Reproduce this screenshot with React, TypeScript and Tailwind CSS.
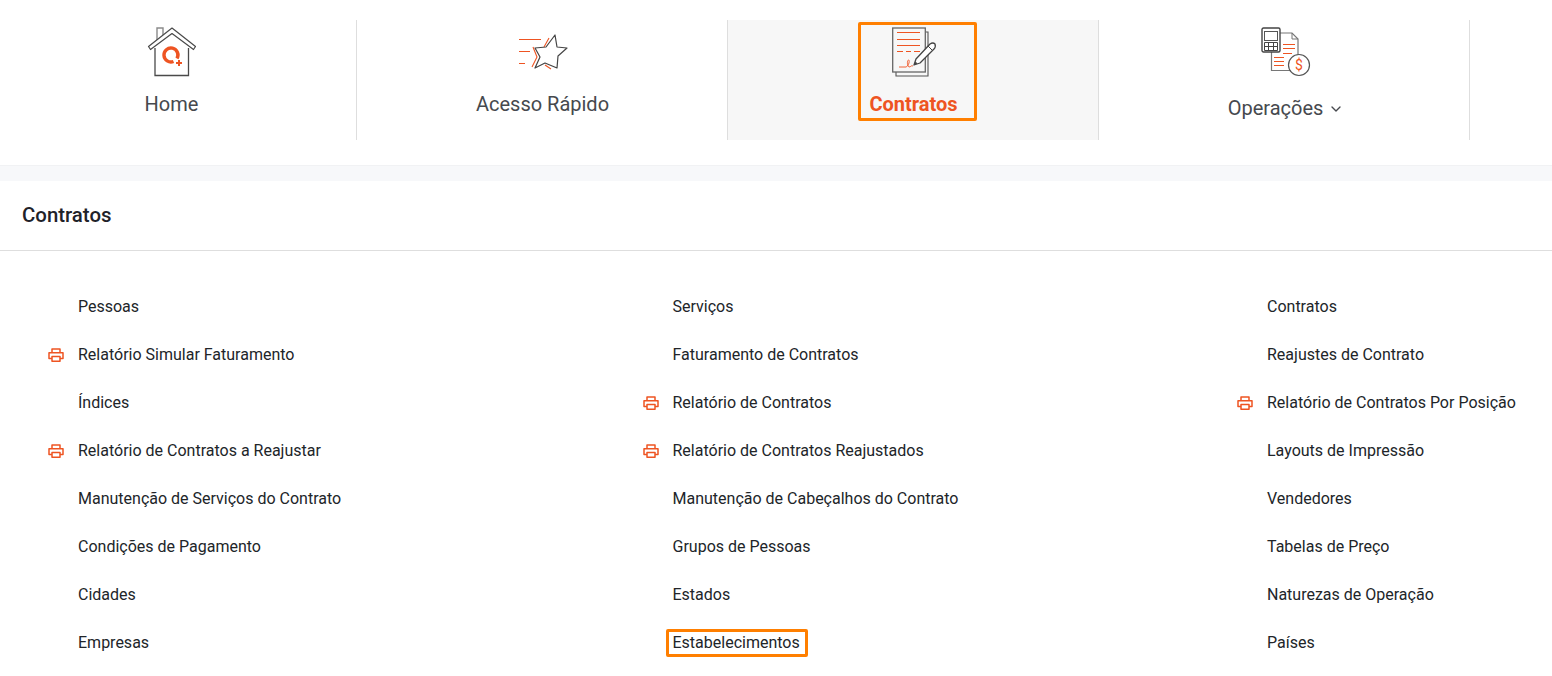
import { ChevronDown } from "lucide-react";

const ORANGE = "#ee5422";

const HomeIcon = () => (
  <svg width="50" height="50" viewBox="0 0 50 50" fill="none">
    <path d="M10 13 V1 H16 V8" stroke="#8a8a8a" strokeWidth="1.400" />
    <path d="M8 21 V48.500 H41.500 V21" stroke="#4a4a4a" strokeWidth="1.300" />
    <path d="M25 1 L48.500 19.500 L46.500 22.500 L25 6.500 L3.500 22.500 L1.500 19.500 Z" fill="#fff" stroke="#4a4a4a" strokeWidth="1.200" strokeLinejoin="round" />
    <path d="M30 31.500 A7 7 0 1 0 26.500 34.500" stroke={ORANGE} strokeWidth="3.400" />
    <path d="M32 33 V39 M29 36 H35" stroke={ORANGE} strokeWidth="2" />
  </svg>
);

const StarIcon = () => (
  <svg width="52" height="38" viewBox="0 0 52 38" fill="none">
    <path d="M1 6.500 H23 M1 18.500 H12 M1 30.500 H7" stroke={ORANGE} strokeWidth="1" />
    <path d="M15 14 L19 24 L14 34 M26 14 L31 5 M27 32 L33 36" stroke={ORANGE} strokeWidth="1.100" />
    <path d="M37 2 L39 14 L49 15 L40 23 L39 35 L27 30 L17 35 L22 24 L17 15 L28 14 Z" fill="#fff" stroke="#444" strokeWidth="1.200" strokeLinejoin="round" />
  </svg>
);

const ContractIcon = () => (
  <svg width="46" height="50" viewBox="0 0 46 50" fill="none">
    <path d="M4 45 V49 H36 V5 H33" stroke="#555" strokeWidth="1.100" />
    <rect x="0.700" y="1" width="32.600" height="44" fill="#f7f7f7" stroke="#666" strokeWidth="1.300" />
    <path d="M5 5.500 H28 M5 12.500 H28 M5 18.500 H28" stroke={ORANGE} strokeWidth="1" />
    <path d="M5 24.500 H11 M14 24.500 H19 M22 24.500 H28" stroke={ORANGE} strokeWidth="1" />
    <path d="M7 40 H14 C17 39 18 33 16.500 33 C15 33 15 39 17 40 C19 40 19 38 21 39" stroke={ORANGE} strokeWidth="0.900" />
    <path d="M22 38 L24 32 L38 17 Q41 15 43 17 Q44 20 42 22 L28 36 Z" fill="#fff" stroke="#444" strokeWidth="1.300" strokeLinejoin="round" />
    <path d="M36 19 L40.500 23.500" stroke="#444" strokeWidth="1" />
    <path d="M22 38 L23.500 34.500 L25.500 36.500 Z" fill="#444" />
  </svg>
);

const OperationsIcon = () => (
  <svg width="50" height="50" viewBox="0 0 50 50" fill="none">
    <path d="M10.500 6 H31 L37 12 V43.500 H10.500 Z" fill="#fff" stroke="#777" strokeWidth="1.200" />
    <path d="M31 6 V12 H37" stroke="#777" strokeWidth="1" />
    <path d="M22 17.500 H34 M22 21.500 H34 M22 26.500 H31 M13 30.500 H23 M13 34.500 H23 M13 38.500 H23" stroke={ORANGE} strokeWidth="1" />
    <rect x="1" y="1" width="18" height="24" rx="1.500" fill="#fff" stroke="#444" strokeWidth="1.400" />
    <rect x="3.500" y="4.500" width="13" height="9" stroke="#555" strokeWidth="1" />
    <path d="M3.500 15.500 H16.500 V23.500 H3.500 Z M7.500 15.500 V23.500 M12.500 15.500 V23.500 M3.500 19.500 H16.500" stroke="#444" strokeWidth="1" />
    <circle cx="38" cy="38" r="10.500" fill="#fff" stroke="#555" strokeWidth="1.200" />
    <text x="38" y="43" textAnchor="middle" fontSize="14" fill={ORANGE} fontFamily="Roboto, sans-serif">$</text>
  </svg>
);

const PrinterIcon = () => (
  <svg width="16" height="14" viewBox="0 0 16 14" fill="none" stroke={ORANGE} strokeWidth="1.500" strokeLinejoin="round">
    <path d="M4 4.500 V1 H12 V4.500" />
    <path d="M4 10.500 H1 V4.750 H15 V10.500 H12" />
    <path d="M4 8.500 H12 V13.250 H4 Z" />
  </svg>
);

const columns = [
  [
    { label: "Pessoas" },
    { label: "Relatório Simular Faturamento", print: true },
    { label: "Índices" },
    { label: "Relatório de Contratos a Reajustar", print: true },
    { label: "Manutenção de Serviços do Contrato" },
    { label: "Condições de Pagamento" },
    { label: "Cidades" },
    { label: "Empresas" },
  ],
  [
    { label: "Serviços" },
    { label: "Faturamento de Contratos" },
    { label: "Relatório de Contratos", print: true },
    { label: "Relatório de Contratos Reajustados", print: true },
    { label: "Manutenção de Cabeçalhos do Contrato" },
    { label: "Grupos de Pessoas" },
    { label: "Estados" },
    { label: "Estabelecimentos", focus: true },
  ],
  [
    { label: "Contratos" },
    { label: "Reajustes de Contrato" },
    { label: "Relatório de Contratos Por Posição", print: true },
    { label: "Layouts de Impressão" },
    { label: "Vendedores" },
    { label: "Tabelas de Preço" },
    { label: "Naturezas de Operação" },
    { label: "Países" },
  ],
];

const App = () => {
  return (
    <div className="h-[676px] w-[1552px] overflow-hidden bg-white font-['Roboto',sans-serif]">
      {/* Top navigation */}
      <div className="h-[165px] pt-5">
        <div className="ml-[-15px] flex h-[120px] w-[1485px]">
          <div className="flex w-[372px] flex-col items-center border-r border-[#dedede] pt-[7px] pl-[2px] text-[#46494e]">
            <HomeIcon />
            <span className="mt-[15px] text-xl leading-6">Home</span>
          </div>
          <div className="flex w-[371px] flex-col items-center border-r border-[#dedede] pt-[13px] pl-[1px] text-[#46494e]">
            <span className="ml-[3px]">
              <StarIcon />
            </span>
            <span className="mt-[21px] text-xl leading-6">Acesso Rápido</span>
          </div>
          <div className="flex w-[371px] flex-col items-center border-r border-[#dedede] bg-[#f7f7f7] pt-[2px]">
            <div className="ml-[9px] flex h-[99px] w-[119px] flex-col items-center rounded-[2px] border-[3px] border-[#ff7f00] pt-[2px] pr-[8px]">
              <span className="ml-[3px]">
                <ContractIcon />
              </span>
              <span className="mt-[15px] text-xl leading-6 font-bold text-[#ee5422]">Contratos</span>
            </div>
          </div>
          <div className="flex w-[371px] flex-col items-center border-r border-[#dedede] pt-[7px] pl-[4px] text-[#46494e]">
            <OperationsIcon />
            <span className="mt-[19px] flex items-center gap-[5px] text-xl leading-6">
              Operações
              <ChevronDown size={16} strokeWidth={2} className="mt-[2px]" />
            </span>
          </div>
        </div>
      </div>

      <div className="h-4 border-t border-[#f1f2f4] bg-[#f7f8fa]" />

      {/* Section title */}
      <div className="flex h-[70px] items-center border-b border-[#dedede] pl-[22px]">
        <h2 className="text-[20.400px] font-medium text-[#1f2229]">Contratos</h2>
      </div>

      {/* Menu links */}
      <div className="grid grid-cols-[594.5px_594.5px_1fr] pt-8 pl-12">
        {columns.map((items, i) => (
          <div key={i} className="flex flex-col">
            {items.map((item) => (
              <div key={item.label} className="flex h-12 items-center text-base whitespace-nowrap text-[#212529]">
                <span className="flex w-[30px] shrink-0 items-center pb-[1px]">
                  {item.print && <PrinterIcon />}
                </span>
                {item.focus ? (
                  <span className="ml-[-7px] rounded-[2px] border-[3px] border-[#ff7f00] pr-[5px] pl-[4px] leading-[22px]">
                    {item.label}
                  </span>
                ) : (
                  <span>{item.label}</span>
                )}
              </div>
            ))}
          </div>
        ))}
      </div>
    </div>
  );
};

export default App;
